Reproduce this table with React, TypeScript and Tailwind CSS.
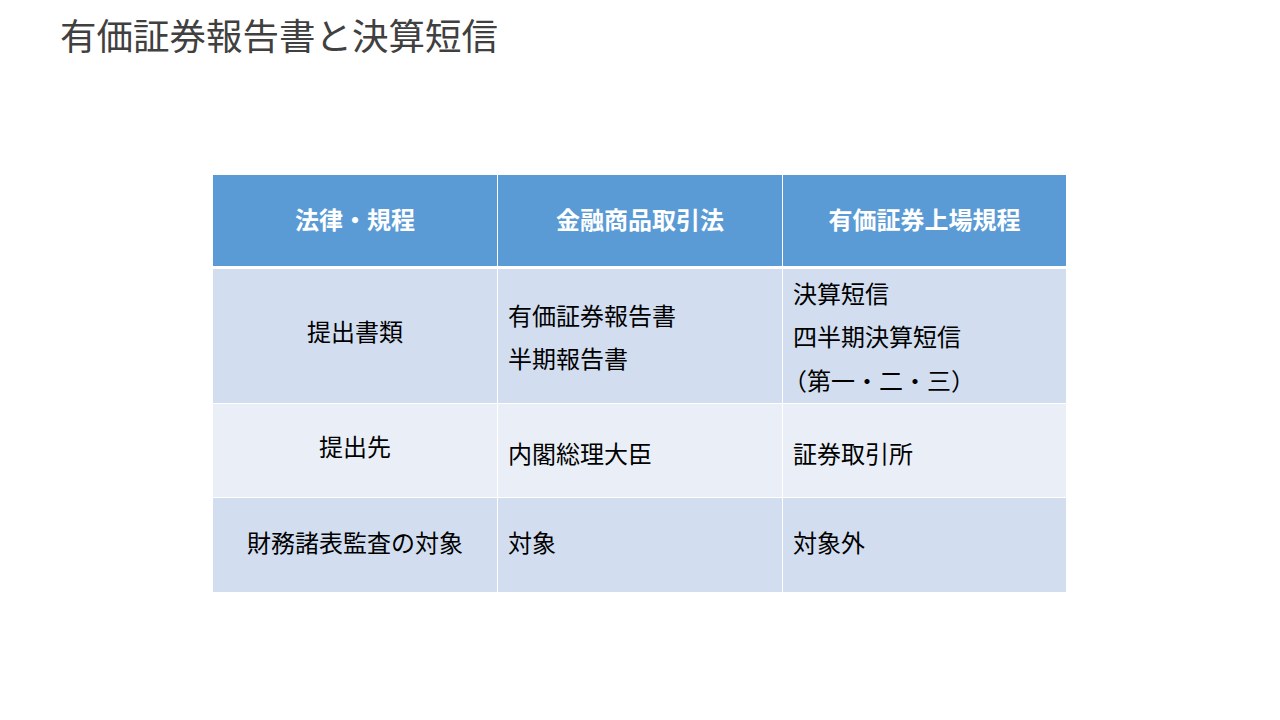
const font = { fontFamily: '"Noto Sans CJK JP", "Noto Sans", sans-serif' };

type Row = { label: string; fsa: string[]; tse: string[]; bg: string; h: string; first: string; rest: string };

const rows: Row[] = [
  {
    label: "提出書類",
    fsa: ["有価証券報告書", "半期報告書"],
    tse: ["決算短信", "四半期決算短信", "（第一・二・三）"],
    bg: "bg-[#d2deef]",
    h: "h-[134px]",
    first: "pb-[10px]",
    rest: "",
  },
  {
    label: "提出先",
    fsa: ["内閣総理大臣"],
    tse: ["証券取引所"],
    bg: "bg-[#eaeff7]",
    h: "h-[93px]",
    first: "pb-[10px]",
    rest: "pt-[4px]",
  },
  {
    label: "財務諸表監査の対象",
    fsa: ["対象"],
    tse: ["対象外"],
    bg: "bg-[#d2deef]",
    h: "h-[94px]",
    first: "pb-[6px]",
    rest: "pb-[6px]",
  },
];

function Lines({ lines }: { lines: string[] }) {
  return (
    <div className="leading-[43.5px]">
      {lines.map((l) => (
        <div key={l} className={l.startsWith("（") ? "-ml-[10px]" : ""}>
          {l}
        </div>
      ))}
    </div>
  );
}

export default function App() {
  return (
    <div className="w-[1280px] h-[720px] bg-white overflow-hidden" style={font}>
      {/* Title */}
      <h1 className="pl-[60px] pt-[17px] text-[36.5px] leading-[36px] font-normal text-[#404040]">
        有価証券報告書と決算短信
      </h1>

      {/* Table */}
      <div className="mt-[122px] ml-[213px] w-[853px] flex flex-col bg-white text-[24px] text-black">
        <div className="flex gap-px h-[91px] mb-[2px] text-white font-bold">
          {["法律・規程", "金融商品取引法", "有価証券上場規程"].map((t, i) => (
            <div
              key={t}
              className={`${i === 2 ? "w-[283px]" : "w-[284px]"} bg-[#5b9bd5] flex items-center justify-center pb-[4px]`}
            >
              {t}
            </div>
          ))}
        </div>
        {rows.map((r) => (
          <div key={r.label} className={`flex gap-px mt-px ${r.h}`}>
            <div className={`w-[284px] ${r.bg} flex items-center justify-center ${r.first}`}>
              {r.label}
            </div>
            <div className={`w-[284px] ${r.bg} flex items-center pl-[10px] ${r.rest}`}>
              <Lines lines={r.fsa} />
            </div>
            <div className={`w-[283px] ${r.bg} flex items-center pl-[10px] ${r.rest}`}>
              <Lines lines={r.tse} />
            </div>
          </div>
        ))}
      </div>
    </div>
  );
}
